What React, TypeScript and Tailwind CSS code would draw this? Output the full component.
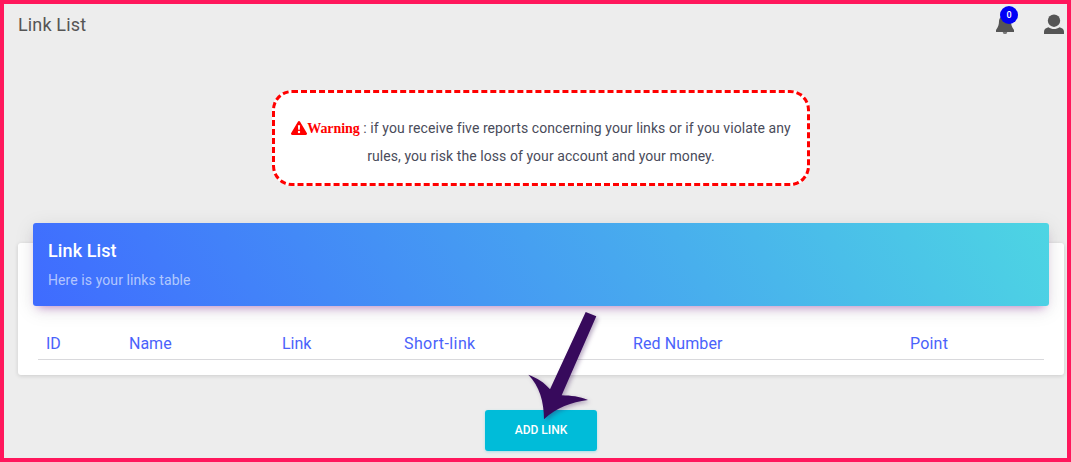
import { ReactNode } from 'react';

interface Column {
  label: string;
  width: string;
  tracking?: string;
}

const columns: Column[] = [
  { label: 'ID', width: 'w-[83px]' },
  { label: 'Name', width: 'w-[153px]' },
  { label: 'Link', width: 'w-[122px]' },
  { label: 'Short-link', width: 'w-[229px]', tracking: 'tracking-[0.4px]' },
  { label: 'Red Number', width: 'w-[277px]', tracking: 'tracking-[0.1px]' },
  { label: 'Point', width: 'w-[142px]', tracking: 'tracking-[0.2px]' },
];

function Navbar() {
  return (
    <header className="flex h-[86px] items-start justify-between pl-[14px] pr-[3px]">
      <h1 className="pt-[7px] text-[18px] leading-[27px] tracking-[0.15px] text-[#555555]">Link List</h1>
      <div className="flex gap-[30px] pt-[10px]">
        <button className="relative h-5 w-[18px]">
          <svg viewBox="0 0 18 20" className="h-5 w-[18px] fill-[#555555]">
            <path d="M9 1.500c-4 .5-6 2.800-6 6-.1 3-.7 5.500-3 8.500V18h18v-2c-2.300-3-2.900-5.500-3-8.500 0-3.200-2-5.500-6-6zM6.800 18.300h4.400c0 1-1 1.500-2.200 1.500s-2.200-.5-2.200-1.500z" />
          </svg>
          <span className="absolute -top-2 left-1 flex h-[18px] w-[18px] items-center justify-center rounded-full bg-[#0000f5] pt-0.5 text-[9px] font-medium text-white">
            0
          </span>
        </button>
        <button className="h-5 w-5">
          <svg viewBox="0 0 20 20" className="h-5 w-5 fill-[#555555]">
            <circle cx="10" cy="6.700" r="6.200" />
            <path d="M4.500 13.200c3 2.400 8 2.400 11 0 2.700.7 4.500 2 4.500 4.500V20H0v-2.300c0-2.500 1.800-3.800 4.500-4.500z" />
          </svg>
        </button>
      </div>
    </header>
  );
}

function Warning({ children }: { children: ReactNode }) {
  return (
    <div className="ml-[268px] h-[96px] w-[538px] rounded-[20px] border-[3px] border-dashed border-[#ff0000] bg-white px-2 pt-[21px] text-center text-[14px] leading-7 tracking-[0.075px] text-[#494b5a]">
      <svg viewBox="0 0 16 14" className="inline-block h-[14px] w-4 fill-[#ff0000] align-[-2px]">
        <path
          fillRule="evenodd"
          d="M6.900.7a1.300 1.300 0 0 1 2.200 0l6.700 11.300A1.300 1.300 0 0 1 14.700 14H1.300A1.300 1.300 0 0 1 .2 12zM6.900 4.300l.3 4.500h1.600l.3-4.500zM8 9.800a1.200 1.200 0 1 0 0 2.400 1.200 1.200 0 0 0 0-2.400z"
        />
      </svg>
      <b className="font-['Liberation_Serif',serif] font-bold leading-none tracking-[-0.05px] text-[#ff0000]">Warning</b>{' '}
      {children}
    </div>
  );
}

function LinkTable() {
  return (
    <section className="ml-[14px] mt-[57px] h-[132px] w-[1046px] rounded-[3px] bg-white px-[15px] shadow-[0_1px_4px_rgba(0,0,0,0.14)]">
      <div className="relative -top-5 h-[83px] rounded-[3px] bg-[linear-gradient(60deg,#3f6bff,#4dd5e3)] px-[15px] pt-[15px] shadow-[0_4px_20px_rgba(0,0,0,0.1),0_6px_9px_-5px_rgba(156,39,176,0.5)]">
        <h4 className="text-[18px] font-medium leading-[26px] tracking-[0.1px] text-white">Link List</h4>
        <p className="mt-[6px] text-[14px] leading-5 tracking-[0.08px] text-white/60">Here is your links table</p>
      </div>
      <table className="ml-[5px] w-[1006px] table-fixed border-collapse">
        <thead>
          <tr className="border-b border-[#d9d9dc]">
            {columns.map((column) => (
              <th
                key={column.label}
                className={`${column.width} ${column.tracking ?? ''} h-[33px] px-2 pb-0 pt-1 text-left text-[16px] font-normal leading-6 text-[#4a62fb]`}
              >
                {column.label}
              </th>
            ))}
          </tr>
        </thead>
      </table>
    </section>
  );
}

// Pointer towards the "Add link" button, drawn over the page
function Arrow() {
  return (
    <svg
      viewBox="0 0 66 114"
      className="pointer-events-none absolute left-[524px] top-[306px] h-[114px] w-[66px] overflow-visible fill-[#370a5c] drop-shadow-[2px_2px_2px_rgba(60,20,90,0.35)]"
    >
      <path d="M57.700 2l10.600 4.300-34.600 79c9 .3 18 1 26.300 4.700-17 2.500-31 7-44 19.300C16 92 11.500 76 .3 64.700 9 68 16.500 72.500 22 79.300z" />
    </svg>
  );
}

export default function App() {
  return (
    <main className="relative h-[462px] w-[1071px] overflow-hidden border-4 border-[#ff175c] bg-[#ededed] font-[Roboto,sans-serif]">
      <Navbar />
      <Warning>
        : if you receive five reports concerning your links or if you violate any
        <br />
        rules, you risk the loss of your account and your money.
      </Warning>
      <LinkTable />
      <button className="ml-[481px] mt-[35px] block h-[41px] w-28 rounded-[3px] bg-[#00bcd9] pb-0.5 text-[12px] font-medium text-white shadow-[0_1px_3px_rgba(0,188,217,0.3)]">
        ADD LINK
      </button>
      <Arrow />
    </main>
  );
}
